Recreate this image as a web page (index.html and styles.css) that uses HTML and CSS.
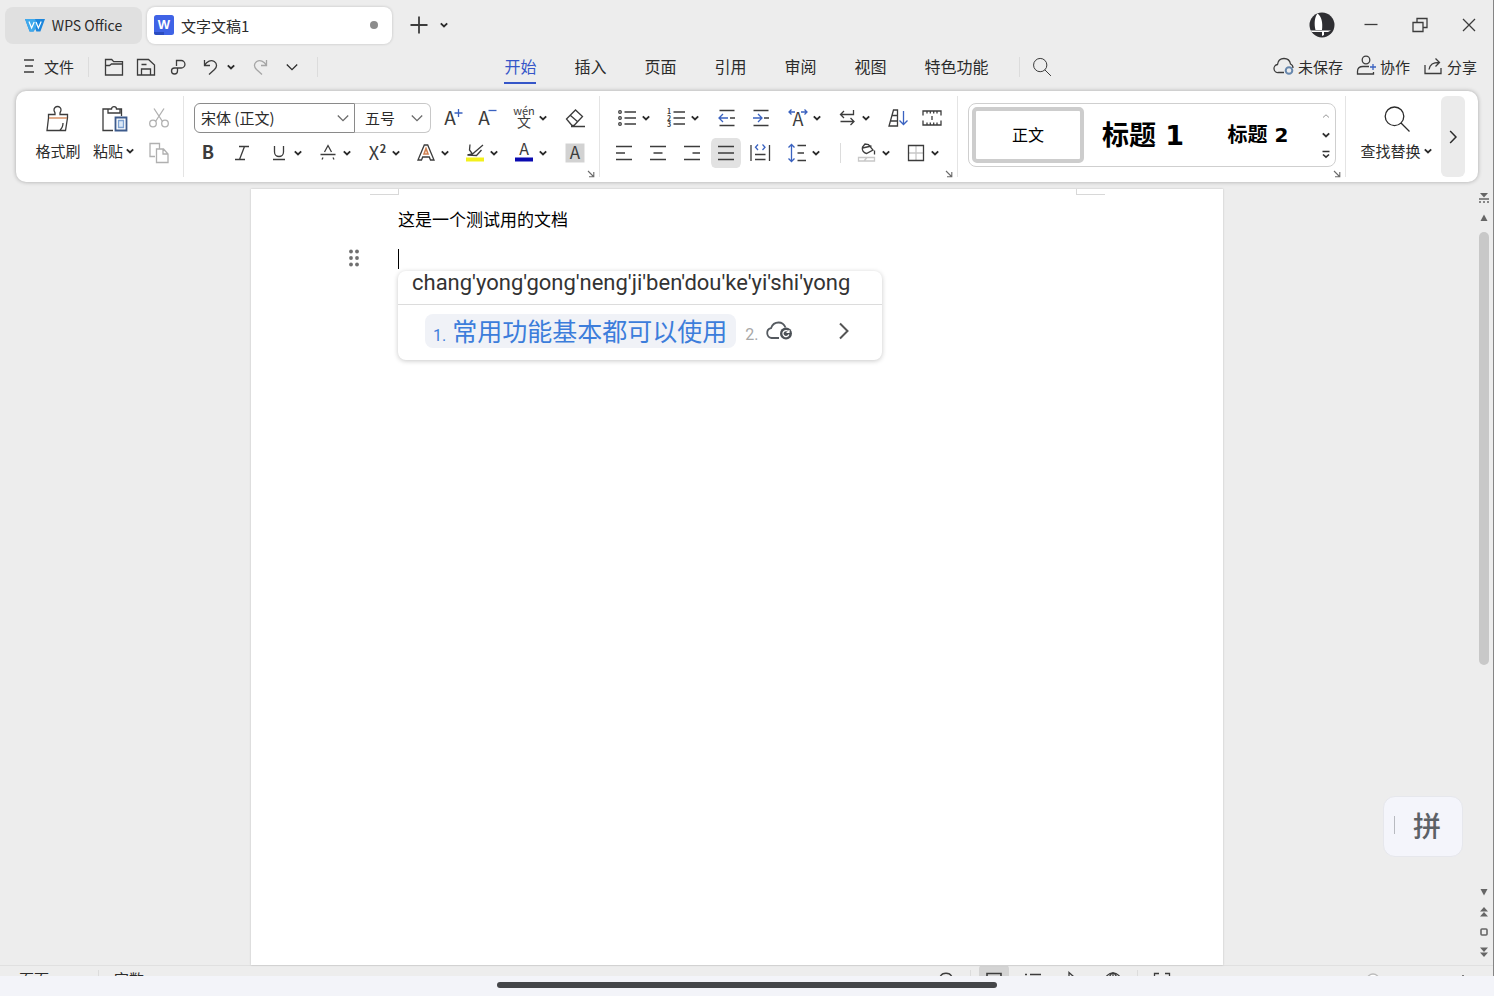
FILE: index.html
```html
<!DOCTYPE html>
<html lang="zh-CN">
<head>
    <meta charset="UTF-8">
    <meta name="viewport" content="width=device-width, initial-scale=1.0">
    <title>文字文稿1 - WPS Office</title>
    <link rel="stylesheet" href="styles.css">
</head>
<body>
    <!-- Shared symbols -->
    <svg class="symbols" aria-hidden="true">
        <symbol id="caret" viewBox="0 0 10 10"><path d="M1.8 3.4 5 6.4 8.2 3.4" fill="none" stroke="currentColor" stroke-width="1.9"/></symbol>
        <symbol id="chevron" viewBox="0 0 14 14"><path d="M1.8 4.5 7 9.6 12.2 4.5" fill="none" stroke="currentColor" stroke-width="1.3"/></symbol>
        <symbol id="launch" viewBox="0 0 8 8"><path d="M1 1 6.5 6.5M6.8 2V6.8H2" fill="none" stroke="currentColor" stroke-width="1.1"/></symbol>
        <symbol id="search" viewBox="0 0 28 28"><path d="M11.5 2a9.3 9.3 0 1 0 0 18.6 9.3 9.3 0 0 0 0-18.6zM18 18l8.5 8.5" fill="none" stroke="currentColor" stroke-width="1.3"/></symbol>
    </svg>

    <div class="window">
        <header class="titlebar">
            <button class="tab tab-home">
                <svg class="logo" viewBox="0 0 20 14"><path d="M0 1h20l-4.6 12.500h-4L10 10l-1.400 3.500h-4z" fill="#1c86dc"/><path d="M0 1h10l2 5-2 5.500L8.600 13.500h-4z" fill="#3fa9ec"/><path d="M4 3.600 6.600 10 9.200 4M11 4l2.400 6L16.200 3.600" fill="none" stroke="#fff" stroke-width="1.2"/></svg>
                WPS Office
            </button>
            <button class="tab tab-doc">
                <svg class="doc-icon" viewBox="0 0 20 20"><rect width="20" height="20" rx="2.5" fill="#3f63e6"/><path d="M0 17h10v3H2.500A2.500 2.500 0 0 1 0 17.500z" fill="#2b4cc0"/><text x="10" y="13.5">W</text></svg>
                <span>文字文稿1</span>
                <span class="unsaved-dot"></span>
            </button>
            <button class="tool plus" aria-label="新建"><svg class="icon" viewBox="0 0 24 24"><path d="M12 3.5v17M3.5 12h17" stroke-width="1.8"/></svg></button>
            <button class="tab-list" aria-label="标签列表"><svg class="caret"><use href="#caret"/></svg></button>
            <div class="window-controls">
                <button aria-label="账号"><svg class="avatar" viewBox="0 0 26 26"><circle cx="13" cy="13" r="12.5" fill="#2e2e32"/><path d="M6.500 18C5 12 5.500 5 8.500 1.500 12.500 4 14 11 13 18zM1 18.500h21l-3 1.500h-4v3l-2 1v-4H3z" fill="#fff"/></svg></button>
                <button aria-label="最小化"><svg class="icon" viewBox="0 0 24 24"><path d="M5.5 11.5h13"/></svg></button>
                <button aria-label="还原"><svg class="icon" viewBox="0 0 24 24"><path d="M5 9.5h10v9H5zM9 9.5v-4h10v9h-4"/></svg></button>
                <button aria-label="关闭"><svg class="icon" viewBox="0 0 24 24"><path d="M6 6l12 12M18 6 6 18"/></svg></button>
            </div>
        </header>

        <nav class="menubar">
            <div class="quick">
                <button class="file-btn"><svg class="icon-sm" viewBox="0 0 14 16"><path d="M2 2h10M3 8h8M2 14h10"/></svg>文件</button>
                <span class="divider"></span>
                <button class="quick-btn" aria-label="打开"><svg class="icon" viewBox="0 0 24 24"><path d="M3.5 20V4.5h6.2l2 2.2h8.800V20zM3.5 10.500h4l2-1.5h11"/></svg></button>
                <button class="quick-btn" aria-label="保存"><svg class="icon" viewBox="0 0 24 24"><path d="M3.5 20V4.5h11l6 5.5v10zM7.5 9.5h5M7.5 20v-6h9v6"/></svg></button>
                <button class="quick-btn" aria-label="输出"><svg class="icon" viewBox="0 0 24 24"><path d="M10.5 11V5.5h4.7a3.7 3.7 0 0 1 0 7.5H8.5a3 3 0 1 0 3 3v-3"/></svg></button>
                <button class="quick-btn" aria-label="撤销"><svg class="icon" viewBox="0 0 24 24"><path d="M6.500 5v5.500H12M6.500 10.500C9 6 13 4.500 16.300 6.500 19.500 8.800 19 12 16.500 14.500L11 19.500"/></svg></button>
                <button class="quick-caret" aria-label="撤销列表"><svg class="caret"><use href="#caret"/></svg></button>
                <button class="quick-btn disabled" aria-label="恢复" disabled><svg class="icon" viewBox="0 0 24 24"><path d="M18.5 5v5.5H13M18.5 10.500C16 6 12 4.5 8.700 6.500 5.500 8.800 6 12 8.500 14.500L14 19.500"/></svg></button>
                <button class="quick-btn" aria-label="更多"><svg class="chevron"><use href="#chevron"/></svg></button>
                <span class="divider"></span>
            </div>
            <div class="menu-tabs">
                <a href="#" class="active">开始</a>
                <a href="#">插入</a>
                <a href="#">页面</a>
                <a href="#">引用</a>
                <a href="#">审阅</a>
                <a href="#">视图</a>
                <a href="#">特色功能</a>
                <span class="divider"></span>
                <button class="menu-search" aria-label="搜索"><svg><use href="#search"/></svg></button>
            </div>
            <div class="share">
                <button><svg class="icon" viewBox="0 0 24 24"><path d="M12 18.5H6.5a4 4 0 0 1-1-8C6 6.5 9 4.5 12 4.5c4 0 6 2.500 6.500 5.500 2 .8 2.500 2 2.500 4"/><circle cx="17" cy="16.500" r="3.300" fill="#ededed" stroke="#6787ad" stroke-width="2"/></svg>未保存</button>
                <button><svg class="icon" viewBox="0 0 24 24"><circle cx="12" cy="6" r="3.8"/><path d="M15 12.500H9c-3.500 0-5.500 2-5.500 5V20h16v-2"/><path class="blue" d="M19 10v6M16 13h6"/></svg>协作</button>
                <button><svg class="icon" viewBox="0 0 24 24"><path d="M4 11v8.500h16V14M8 15.500C9 10 12 8.500 18 8.500M14.500 4.500l4 4-4 4"/></svg>分享</button>
            </div>
        </nav>

        <section class="ribbon">
            <div class="group clipboard">
                <button class="big-btn">
                    <svg class="icon-lg" viewBox="0 0 28 28"><path d="M4.500 13V9.500h6.500V8c0-1-1-1.500-1-3a3.500 3.500 0 0 1 7 0c0 1.500-1 2-1 3v1.500h7.500V13M4.500 13 3 25.500h18.500L23.500 13M16 25c2.500-2 3-4 3-7"/><path class="orange" d="M5 13h18"/></svg>
                    <span>格式刷</span>
                </button>
                <button class="big-btn">
                    <svg class="icon-lg" viewBox="0 0 28 28"><path d="M9 4H3v21.500h10M19 4h2.500v7M8 4h3.500c0-3.300 5-3.300 5 0H20v4H8z"/><path d="M15.500 12.500h11v13h-11z" stroke="#3c5a8c" stroke-width="1.8"/><path d="M18.500 15.500h5v7h-5z" fill="#dce9f8" stroke="#7ea2d2"/></svg>
                    <span>粘贴<svg class="caret"><use href="#caret"/></svg></span>
                </button>
                <div class="rows">
                    <div class="row"><button class="tool disabled" aria-label="剪切" disabled><svg class="icon" viewBox="0 0 24 24"><path d="M7 2.500l8.500 13M17 2.500 8.500 15.500"/><circle cx="6" cy="17.500" r="3.300"/><circle cx="18" cy="17.500" r="3.300"/></svg></button></div>
                    <div class="row"><button class="tool disabled" aria-label="复制" disabled><svg class="icon" viewBox="0 0 24 24"><path d="M8 15.500H3v-13h9.500V8M9.500 8h7l4.500 5v8.500H9.500zM16 8.500V13h5"/></svg></button></div>
                </div>
            </div>

            <div class="group">
                <div class="rows">
                    <div class="row">
                        <div class="combo font-name">
                            <select aria-label="字体"><option>宋体 (正文)</option></select>
                            <svg class="chevron"><use href="#chevron"/></svg>
                        </div>
                        <div class="combo font-size">
                            <select aria-label="字号"><option>五号</option></select>
                            <svg class="chevron"><use href="#chevron"/></svg>
                        </div>
                        <button class="tool" aria-label="增大字号"><svg class="icon" viewBox="0 0 24 24"><text class="letter" x="9" y="19" font-size="19">A</text><path class="blue" d="M17.500 3v8M13.500 7h8"/></svg></button>
                        <button class="tool" aria-label="减小字号"><svg class="icon" viewBox="0 0 24 24"><text class="letter" x="9" y="19" font-size="19">A</text><path class="blue" d="M13.500 4.500h8"/></svg></button>
                        <button class="drop" aria-label="拼音指南"><svg class="icon" viewBox="0 0 24 24"><text class="letter" x="12" y="9" font-size="11">wén</text><text class="letter" x="12" y="21" font-size="14">文</text></svg><svg class="caret"><use href="#caret"/></svg></button>
                        <button class="tool" aria-label="清除格式"><svg class="icon" viewBox="0 0 24 24"><path d="M3.500 13 12.500 4l7 6.500-8.500 9H9zM7.500 9.500l7.500 6.500M8 20.500h14"/></svg></button>
                    </div>
                    <div class="row">
                        <button class="tool" aria-label="加粗"><svg class="icon" viewBox="0 0 24 24"><text class="letter bold" x="12" y="18" font-size="18">B</text></svg></button>
                        <button class="tool" aria-label="倾斜"><svg class="icon" viewBox="0 0 24 24"><path d="M9 5.500h10M5 18.500h10M14.500 5.500l-5 13"/></svg></button>
                        <button class="drop" aria-label="下划线"><svg class="icon" viewBox="0 0 24 24"><path d="M7.500 5v6a4.500 4.500 0 0 0 9 0V5M6 18.500h12"/></svg><svg class="caret"><use href="#caret"/></svg></button>
                        <button class="drop" aria-label="删除线"><svg class="icon" viewBox="0 0 24 24"><path d="M8.500 11 12 4.500 15.500 11M4.500 13.500h15M7 16.500 6 18.500M17 16.500l1 2"/></svg><svg class="caret"><use href="#caret"/></svg></button>
                        <button class="drop" aria-label="上标"><svg class="icon" viewBox="0 0 24 24"><text class="letter" x="9" y="19" font-size="18">X</text><text class="letter bold" x="18" y="12" font-size="11">2</text></svg><svg class="caret"><use href="#caret"/></svg></button>
                        <button class="drop" aria-label="文字效果"><svg class="icon" viewBox="0 0 24 24"><path d="M4 19 10.300 4h3.400L20 19h-3.500l-1.200-3H8.700l-1.200 3z"/><path class="orange" d="M10 13l2-5.500 2 5.500z" stroke-width="1.6"/></svg><svg class="caret"><use href="#caret"/></svg></button>
                        <button class="drop" aria-label="突出显示"><svg class="icon" viewBox="0 0 24 24"><path d="M7 3.500 6.500 9l3 4L20 4M9.500 12.500 4.500 14l9 .5 5-5.500"/><path d="M3 18.500h18" stroke="#f3f01c" stroke-width="4"/></svg><svg class="caret"><use href="#caret"/></svg></button>
                        <button class="drop" aria-label="字体颜色"><svg class="icon" viewBox="0 0 24 24"><text class="letter" x="12" y="14" font-size="16">A</text><path d="M3 18.500h18" stroke="#0a0ab0" stroke-width="4"/></svg><svg class="caret"><use href="#caret"/></svg></button>
                        <button class="tool" aria-label="字符底纹"><svg class="icon" viewBox="0 0 24 24"><path d="M2.500 2.500h19v19h-19z" fill="#d2d2d2" stroke="none"/><text class="letter" x="12" y="18" font-size="17">A</text></svg></button>
                    </div>
                </div>
                <button class="launch" aria-label="字体设置"><svg><use href="#launch"/></svg></button>
            </div>

            <div class="group">
                <div class="rows">
                    <div class="row">
                        <button class="drop" aria-label="项目符号"><svg class="icon" viewBox="0 0 24 24"><path d="M9.500 6H21M9.500 12H21M9.500 18H21"/><circle cx="5" cy="6" r="1.300"/><circle cx="5" cy="12" r="1.300"/><circle cx="5" cy="18" r="1.300"/></svg><svg class="caret"><use href="#caret"/></svg></button>
                        <button class="drop" aria-label="编号"><svg class="icon" viewBox="0 0 24 24"><path d="M9.500 6H21M9.500 12H21M9.500 18H21"/><text class="letter bold" x="5" y="8" font-size="7">1</text><text class="letter bold" x="5" y="14.500" font-size="7">2</text><text class="letter bold" x="5" y="21" font-size="7">3</text></svg><svg class="caret"><use href="#caret"/></svg></button>
                        <button class="tool" aria-label="减少缩进"><svg class="icon" viewBox="0 0 24 24"><path d="M4.500 4.500h15M4.500 19.500h15M15 12h5"/><path class="blue" d="M13 12H4.500M8 8l-4 4 4 4"/></svg></button>
                        <button class="tool" aria-label="增加缩进"><svg class="icon" viewBox="0 0 24 24"><path d="M4.500 4.500h15M4.500 19.500h15M15 12h5"/><path class="blue" d="M4 12h8.500M9 8l4 4-4 4"/></svg></button>
                        <button class="drop" aria-label="字符缩放"><svg class="icon" viewBox="0 0 24 24"><text class="letter" x="12" y="20" font-size="18">A</text><path class="blue" d="M9 6H3M5.500 3.500 3 6l2.500 2.500M15 6h6M18.500 3.500 21 6l-2.500 2.500"/></svg><svg class="caret"><use href="#caret"/></svg></button>
                        <button class="drop" aria-label="制表位"><svg class="icon" viewBox="0 0 24 24"><path d="M18.500 4v4.500H5.500M9 5 5.500 8.500 9 12M5.500 15.500H19M15.500 12l3.500 3.500-3.500 3.500"/></svg><svg class="caret"><use href="#caret"/></svg></button>
                        <button class="tool" aria-label="排序"><svg class="icon" viewBox="0 0 24 24"><path d="M7.500 4h4v16H3zM6.500 9.500h5M5 15h6.500"/><path class="blue" d="M17.500 5v13.500M13.500 14.500l4 4 4-4"/></svg></button>
                        <button class="tool" aria-label="制表符"><svg class="icon" viewBox="0 0 24 24"><path d="M3 9.500V5h18v4.500M3 14.500V19h18v-4.500M7 5v2.500M10.300 5v2.500M13.700 5v2.500M17 5v2.500M7 19v-2.500M10.300 19v-2.500M13.700 19v-2.500M17 19v-2.500M12 10v4"/></svg></button>
                    </div>
                    <div class="row">
                        <button class="tool" aria-label="左对齐"><svg class="icon" viewBox="0 0 24 24"><path d="M4 5.500h16M4 12h9M4 18.500h16"/></svg></button>
                        <button class="tool" aria-label="居中"><svg class="icon" viewBox="0 0 24 24"><path d="M4 5.500h16M7.500 12h9M4 18.500h16"/></svg></button>
                        <button class="tool" aria-label="右对齐"><svg class="icon" viewBox="0 0 24 24"><path d="M4 5.500h16M12.500 12H20M4 18.500h16"/></svg></button>
                        <button class="tool pressed" aria-label="两端对齐"><svg class="icon" viewBox="0 0 24 24"><path d="M4 5.500h16M4 12h16M4 18.500h16"/></svg></button>
                        <button class="tool" aria-label="分散对齐"><svg class="icon" viewBox="0 0 24 24"><path d="M3 4v16M21.500 4v16M7 13.500h10.500M7 18.500h10.500"/><path class="blue" d="M10 3.500 7.500 6.200 10 9M14.500 3.500 17 6.200 14.500 9"/></svg></button>
                        <button class="drop" aria-label="行距"><svg class="icon" viewBox="0 0 24 24"><path d="M12.500 4.500H21M12.500 12H19M12.500 19.500H21"/><path class="blue" d="M6.500 4v16M3.500 6.500l3-3 3 3M3.500 17.500l3 3 3-3"/></svg><svg class="caret"><use href="#caret"/></svg></button>
                        <span class="divider"></span>
                        <button class="drop" aria-label="底纹颜色"><svg class="icon" viewBox="0 0 24 24"><path d="M10 3 7.500 6c-1 3 1 6 4 6.500L18 9 13.500 3.500zM7.500 7l9-2M19.500 9.500v4"/><path d="M3.500 16.500h16V20h-16zM9 20l3-3.500" stroke="#c8c8c8"/></svg><svg class="caret"><use href="#caret"/></svg></button>
                        <button class="drop" aria-label="边框"><svg class="icon" viewBox="0 0 24 24"><path d="M12 5v14M5 12h14" stroke="#c8c8c8"/><path d="M4.500 4.500h15v15h-15z"/></svg><svg class="caret"><use href="#caret"/></svg></button>
                    </div>
                </div>
                <button class="launch" aria-label="段落设置"><svg><use href="#launch"/></svg></button>
            </div>

            <div class="group styles">
                <div class="gallery">
                    <button class="style-card selected">正文</button>
                    <button class="style-card heading1">标题 1</button>
                    <button class="style-card heading2">标题 2</button>
                    <div class="gallery-arrows">
                        <button aria-label="上一行" disabled><svg viewBox="0 0 10 10"><path d="M2 6.500 5 3.800 8 6.500"/></svg></button>
                        <button aria-label="下一行"><svg class="caret" viewBox="0 0 10 10"><path d="M1.800 3.400 5 6.400 8.200 3.400" stroke-width="1.900"/></svg></button>
                        <button aria-label="更多样式"><svg viewBox="0 0 10 10"><path d="M1.500 2.500h7M2 5.500 5 8.200 8 5.500" stroke-width="1.6"/></svg></button>
                    </div>
                </div>
                <button class="launch" aria-label="样式设置"><svg><use href="#launch"/></svg></button>
            </div>

            <div class="group editing">
                <button class="big-btn">
                    <svg class="icon-lg"><use href="#search"/></svg>
                    <span>查找替换<svg class="caret"><use href="#caret"/></svg></span>
                </button>
            </div>
            <button class="ribbon-more" aria-label="展开"><svg class="chevron turned"><use href="#chevron"/></svg></button>
        </section>

        <main class="workspace">
            <div class="canvas">
                <article class="page">
                    <span class="crop crop-left"></span>
                    <span class="crop crop-right"></span>
                    <p>这是一个测试用的文档</p>
                    <div class="typing">
                        <svg class="drag-handle" viewBox="0 0 12 18"><circle cx="3" cy="2.500" r="1.900"/><circle cx="9" cy="2.500" r="1.900"/><circle cx="3" cy="9" r="1.900"/><circle cx="9" cy="9" r="1.900"/><circle cx="3" cy="15.500" r="1.900"/><circle cx="9" cy="15.500" r="1.900"/></svg>
                        <span class="cursor"></span>
                        <div class="ime">
                            <div class="ime-pinyin">chang'yong'gong'neng'ji'ben'dou'ke'yi'shi'yong</div>
                            <div class="ime-list">
                                <button class="candidate"><small>1.</small>常用功能基本都可以使用</button>
                                <button class="cloud" aria-label="云候选"><small>2.</small><svg viewBox="0 0 28 20"><path d="M14 17H6.500a5 5 0 0 1-.5-9.800C7.500 3 10 1.500 13.500 1.500c4 0 6 2.500 7 5" fill="none" stroke="#555a60" stroke-width="1.800"/><circle cx="21" cy="12.500" r="6" fill="#4c5157"/><path d="M23.500 11a3 3 0 1 0 .3 2.500M24 9v2.500h-2.500" fill="none" stroke="#fff" stroke-width="1.200"/></svg></button>
                                <button class="ime-next" aria-label="下一页"><svg viewBox="0 0 12 20"><path d="M2 2.500 9.500 10 2 17.500"/></svg></button>
                            </div>
                        </div>
                    </div>
                </article>
            </div>
            <aside class="scrollbar">
                <svg viewBox="0 0 12 12"><path d="M2 1h8L6 5.500z"/><path d="M1 7h10M1 10h2M5 10h2M9 10h2" stroke="#666" stroke-width="1.500"/></svg>
                <svg viewBox="0 0 12 12"><path d="M6 2.500 9.500 9h-7z"/></svg>
                <div class="track"><div class="thumb"></div></div>
                <svg viewBox="0 0 12 12"><path d="M6 9.500 9.500 3h-7z"/></svg>
                <svg viewBox="0 0 12 12"><path d="M6 1l4 4.500H2zM6 6l4 4.500H2z"/></svg>
                <svg viewBox="0 0 12 12"><rect x="3" y="3" width="6" height="6" rx="1" fill="none" stroke="#666" stroke-width="1.600"/></svg>
                <svg viewBox="0 0 12 12"><path d="M6 6l4-4.500H2zM6 11l4-4.500H2z"/></svg>
            </aside>
            <button class="ime-float"><span></span>拼</button>
        </main>

        <footer class="statusbar">
            <div class="status-row">
                <span class="status-page">页面</span>
                <span class="divider"></span>
                <span>字数</span>
                <div class="views">
                    <svg class="icon" viewBox="0 0 24 24"><path d="M6 9c2-5 10-5 12 0"/></svg>
                    <span class="divider"></span>
                    <svg class="icon view-active" viewBox="0 0 24 24"><path d="M5 5.500h14v13H5z" stroke-width="1.6"/></svg>
                    <svg class="icon" viewBox="0 0 24 24"><path d="M4 6.500h2M9 6.500h11M4 12h2M9 12h11"/></svg>
                    <svg class="icon" viewBox="0 0 24 24"><path d="M8 4.500l9 8-9 8z"/></svg>
                    <svg class="icon" viewBox="0 0 24 24"><circle cx="12" cy="13" r="8"/><ellipse cx="12" cy="13" rx="4" ry="8"/><path d="M12 5v16"/></svg>
                    <span class="divider"></span>
                    <svg class="icon" viewBox="0 0 24 24"><path d="M4.500 10V5.500H9M15 5.500h4.500V10"/></svg>
                </div>
                <div class="zoom">
                    <svg class="icon" viewBox="0 0 24 24"><circle cx="12" cy="12" r="6" fill="#fff" stroke="#bbb"/></svg>
                    <svg class="icon" viewBox="0 0 24 24"><path d="M12 7v12M6 13h12"/></svg>
                </div>
            </div>
        </footer>
    </div>
    <div class="gesture"><span></span></div>
</body>
</html>
```
FILE: styles.css
```css
* {
    box-sizing: border-box;
}

body {
    margin: 0;
    height: 100vh;
    display: flex;
    flex-direction: column;
    overflow: hidden;
    background-color: #ededed;
    color: #2b2b2b;
    font-family: 'Noto Sans CJK SC', 'Noto Sans', sans-serif;
    font-size: 15px;
}

button {
    display: flex;
    align-items: center;
    justify-content: center;
    margin: 0;
    padding: 0;
    border: none;
    background: none;
    color: inherit;
    font: inherit;
    white-space: nowrap;
    cursor: pointer;
}

svg {
    display: block;
    flex: none;
}

.symbols {
    display: none;
}

.icon,
.icon-sm,
.icon-lg {
    width: 24px;
    height: 24px;
    overflow: visible;
    fill: none;
    stroke: #3c3c3c;
    stroke-width: 1.3;
}

.icon-sm {
    width: 14px;
    height: 16px;
}

.icon-lg {
    width: 28px;
    height: 28px;
}

.icon .blue {
    stroke: #3a62c0;
}

.icon .orange,
.icon-lg .orange {
    stroke: #d08050;
}

.letter {
    fill: #3c3c3c;
    stroke: none;
    text-anchor: middle;
    font-family: 'Noto Sans CJK SC', sans-serif;
}

.bold {
    font-weight: bold;
}

.caret {
    width: 10px;
    height: 10px;
}

.chevron {
    width: 14px;
    height: 14px;
}

.turned {
    transform: rotate(-90deg);
}

.divider {
    width: 1px;
    height: 20px;
    background-color: #dcdcdc;
}

.window {
    flex: 1;
    min-height: 0;
    display: flex;
    flex-direction: column;
    border-right: 1px solid #858585;
}

/* Title bar */
.titlebar {
    display: flex;
    align-items: center;
    height: 50px;
    padding-left: 5px;
}

.tab {
    height: 37px;
    border-radius: 8px;
    gap: 7px;
}

.tab-home {
    width: 137px;
    margin-right: 5px;
    background-color: #e0e0e0;
    font-size: 14px;
}

.logo {
    width: 20px;
    height: 14px;
}

.tab-doc {
    width: 245px;
    padding: 0 14px 0 7px;
    justify-content: flex-start;
    background-color: #fff;
    box-shadow: 0 0 3px rgba(0, 0, 0, 0.2);
}

.doc-icon {
    width: 20px;
    height: 20px;
}

.doc-icon text {
    fill: #fff;
    font: bold 13px 'Liberation Sans', sans-serif;
    text-anchor: middle;
}

.unsaved-dot {
    width: 8px;
    height: 8px;
    margin-left: auto;
    border-radius: 50%;
    background-color: #8c8c8c;
}

.plus {
    margin-left: 10px;
}

.tab-list {
    width: 16px;
    height: 30px;
}

.window-controls {
    display: flex;
    margin-left: auto;
}

.window-controls button {
    width: 49px;
    height: 40px;
}

.avatar {
    width: 26px;
    height: 26px;
}

/* Menu bar */
.menubar {
    display: flex;
    align-items: center;
    justify-content: space-between;
    height: 34px;
    margin-bottom: 7px;
    padding-right: 16px;
}

.quick,
.menu-tabs,
.share {
    display: flex;
    align-items: center;
}

.file-btn {
    gap: 8px;
    padding: 0 14px 2px 22px;
}

.quick .divider + .quick-btn {
    margin-left: 9px;
}

.quick-btn {
    width: 32px;
    height: 30px;
}

.quick-caret {
    width: 10px;
    height: 30px;
    margin-right: 8px;
}

.quick-btn + .divider {
    margin-left: 9px;
}

.disabled {
    opacity: 0.4;
}

.menu-tabs {
    gap: 38px;
    margin-right: 34px;
    font-size: 16px;
}

.menu-tabs a {
    padding: 3px 0 4px;
    border-bottom: 2px solid transparent;
    line-height: 24px;
    color: #2b2b2b;
    text-decoration: none;
}

.menu-tabs a.active {
    border-color: #3556c8;
    color: #3556c8;
}

.menu-tabs .divider {
    margin: 0 -26px 0 -8px;
}

.menu-search svg {
    width: 20px;
    height: 20px;
}

.share {
    gap: 11px;
}

.share button {
    gap: 2px;
    padding-bottom: 2px;
}

/* Ribbon */
.ribbon {
    position: relative;
    z-index: 1;
    display: flex;
    margin: 0 15px 0 16px;
    padding: 5px 13px 5px 0;
    border-radius: 10px;
    background-color: #fff;
    box-shadow: 0 0 4px rgba(0, 0, 0, 0.3);
}

.group {
    position: relative;
    display: flex;
    height: 81px;
    padding: 7px 7px 0;
    border-right: 1px solid #e4e4e4;
}

.clipboard {
    padding-left: 14px;
}

.big-btn {
    width: 56px;
    height: 65px;
    flex-direction: column;
    justify-content: flex-start;
    gap: 7px;
    padding-top: 2px;
}

.big-btn span {
    display: flex;
    align-items: center;
    gap: 2px;
    line-height: 22px;
}

.rows {
    display: flex;
    flex-direction: column;
    gap: 5px;
}

.row {
    display: flex;
    align-items: center;
    height: 30px;
}

.tool {
    width: 34px;
    height: 30px;
}

.drop {
    width: 49px;
    height: 30px;
    padding-left: 3px;
    gap: 2px;
    justify-content: flex-start;
}

.tool + .drop,
.drop:first-child {
    margin-left: 5px;
}

.row .divider {
    margin: 0 11px 0 9px;
}

.pressed {
    border: 0 solid transparent;
    border-width: 0 2px;
    border-radius: 6px;
    background-color: #e2e2e2;
    background-clip: padding-box;
}

.combo {
    display: grid;
    align-items: center;
    height: 30px;
    border: 1px solid #c8c8c8;
    border-radius: 0 6px 6px 0;
}

.combo select,
.combo svg {
    grid-area: 1 / 1;
}

.combo select {
    width: 100%;
    height: 28px;
    padding: 0 6px 2px;
    border: none;
    background: none;
    color: inherit;
    font: inherit;
    appearance: none;
}

.combo svg {
    justify-self: end;
    margin-right: 4px;
    color: #6a6a6a;
    pointer-events: none;
}

.font-name {
    width: 161px;
    margin-left: 3px;
    border-color: #8a8a8a;
    border-radius: 6px 0 0 6px;
}

.font-size {
    width: 76px;
    margin-right: 5px;
    border-left: none;
}

.font-size select {
    padding-left: 10px;
}

.font-size svg {
    margin-right: 6px;
}

.launch {
    position: absolute;
    right: 4px;
    bottom: -1px;
    color: #6a6a6a;
}

.launch svg {
    width: 8px;
    height: 8px;
}

.styles {
    padding: 7px 9px 0 10px;
}

.gallery {
    display: flex;
    gap: 3px;
    height: 64px;
    padding: 3px 0 3px 3px;
    border: 1px solid #cfcfcf;
    border-radius: 8px;
    color: #000;
}

.style-card {
    width: 112px;
    padding-bottom: 3px;
    font-family: 'DejaVu Sans', 'Noto Sans CJK SC', sans-serif;
    font-size: 16px;
}

.selected {
    border: 4px solid #cdcdcd;
    border-radius: 5px;
}

.heading1 {
    font-size: 27px;
    font-weight: bold;
}

.heading2 {
    font-size: 20px;
    font-weight: bold;
}

.gallery-arrows {
    display: flex;
    flex-direction: column;
    justify-content: space-around;
    width: 18px;
}

.gallery-arrows svg {
    width: 10px;
    height: 10px;
    fill: none;
    stroke: #333;
}

.gallery-arrows button:disabled {
    opacity: 0.5;
}

.editing {
    flex: 1;
    justify-content: center;
    padding: 7px 0 0 6px;
    border-right: none;
}

.ribbon-more {
    width: 24px;
    border-radius: 6px;
    background-color: #ebebeb;
}

.ribbon-more svg {
    width: 16px;
    height: 16px;
}

/* Document */
.workspace {
    position: relative;
    flex: 1;
    min-height: 0;
    display: flex;
    border-bottom: 1px solid #e0e0e0;
}

.canvas {
    flex: 1;
    display: flex;
    justify-content: center;
    padding-top: 7px;
}

.page {
    position: relative;
    width: 972px;
    padding: 17px 147px 0;
    background-color: #fff;
    box-shadow: 0 0 2px rgba(0, 0, 0, 0.2);
    color: #000;
}

.page p {
    margin: 0 0 17px;
    font-size: 17px;
    line-height: 26px;
}

.crop {
    position: absolute;
    top: 0;
    width: 29px;
    height: 6px;
    border-bottom: 1px solid #d8d8d8;
}

.crop-left {
    left: 119px;
    border-right: 1px solid #d8d8d8;
}

.crop-right {
    right: 118px;
    border-left: 1px solid #d8d8d8;
}

.typing {
    position: relative;
    height: 22px;
}

.cursor {
    display: block;
    width: 1px;
    height: 20px;
    background-color: #000;
}

.drag-handle {
    position: absolute;
    left: -50px;
    width: 12px;
    height: 18px;
    fill: #707070;
}

.ime {
    position: absolute;
    top: 22px;
    width: 484px;
    border-radius: 8px;
    background-color: #fff;
    box-shadow: 0 1px 5px rgba(0, 0, 0, 0.22);
}

.ime-pinyin {
    height: 34px;
    padding-left: 14px;
    border-bottom: 1px solid #dcdcdc;
    color: #333;
    font-family: Roboto, sans-serif;
    font-size: 22px;
    line-height: 24px;
}

.ime-list {
    display: flex;
    align-items: center;
    height: 55px;
    padding: 0 30px 3px 27px;
}

.ime small {
    font-family: Roboto, sans-serif;
    font-size: 16px;
}

.candidate {
    height: 34px;
    padding: 0 9px 0 8px;
    gap: 6px;
    align-items: baseline;
    border-radius: 8px;
    background-color: #f0f2f7;
    color: #3c7ddb;
    font-size: 25px;
    line-height: 32px;
}

.cloud {
    gap: 7px;
    margin-left: 9px;
    color: #a8a8a8;
}

.cloud small {
    padding-top: 6px;
}

.cloud svg {
    width: 28px;
    height: 20px;
}

.ime-next {
    margin-left: auto;
}

.ime-next svg {
    width: 16px;
    height: 20px;
    fill: none;
    stroke: #555;
    stroke-width: 2;
}

.scrollbar {
    display: flex;
    flex-direction: column;
    align-items: center;
    gap: 8px;
    width: 19px;
    padding: 10px 0 7px;
}

.scrollbar svg {
    width: 12px;
    height: 12px;
    fill: #666;
}

.track {
    flex: 1;
    width: 10px;
}

.thumb {
    height: 67%;
    border-radius: 5px;
    background-color: #c8c8c8;
}

.ime-float {
    position: absolute;
    right: 30px;
    bottom: 108px;
    width: 80px;
    height: 61px;
    padding: 0 21px 3px 10px;
    justify-content: space-between;
    border: 1px solid #e6e7ec;
    border-radius: 12px;
    background-color: #f4f5fb;
    color: #5c6166;
    font-size: 28px;
    font-weight: 500;
}

.ime-float span {
    width: 1px;
    height: 18px;
    background-color: #b8bac0;
}

/* Status bar, partly covered by the gesture area */
.statusbar {
    height: 10px;
    overflow: hidden;
}

.status-row {
    display: flex;
    align-items: center;
    height: 28px;
    padding: 0 18px 0 19px;
}

.status-page {
    width: 79px;
}

.status-row > span {
    flex: none;
    line-height: 20px;
    padding-bottom: 2px;
}

.status-row > .divider {
    margin-right: 15px;
}

.views {
    display: flex;
    align-items: center;
    gap: 16px;
    margin-left: auto;
}

.views .divider {
    margin: 0 -4px;
}

.view-active {
    width: 30px;
    height: 30px;
    margin: 0 -4px;
    padding: 3px;
    border-radius: 4px;
    background-color: #d4d4d4;
}

.zoom {
    display: flex;
    gap: 66px;
    margin-left: 187px;
}

.gesture {
    display: flex;
    justify-content: center;
    height: 20px;
    padding-top: 6px;
    background-color: #f3f4f9;
}

.gesture span {
    width: 500px;
    max-width: 60%;
    height: 6px;
    border-radius: 3px;
    background-color: #444649;
}
```
